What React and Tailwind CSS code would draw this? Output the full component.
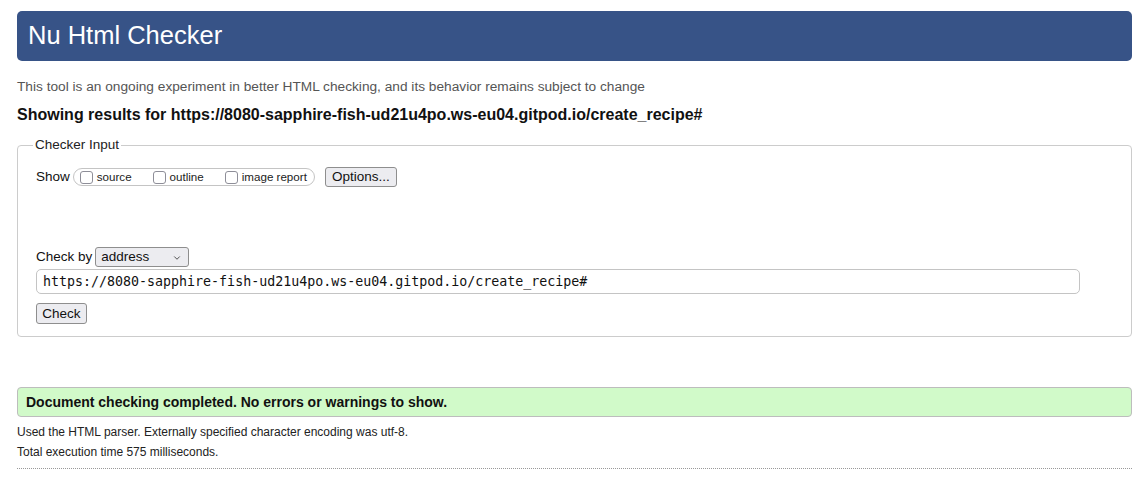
import { ChevronDown } from 'lucide-react'

const url = 'https://8080-sapphire-fish-ud21u4po.ws-eu04.gitpod.io/create_recipe#'

function Box({ label }) {
  return (
    <label className="flex items-center gap-[4px]">
      <input
        type="checkbox"
        className="appearance-none w-[13px] h-[13px] rounded-[3px] border border-[#8e8e98] bg-white"
      />
      <span className="text-[11.6px] text-[#222]">{label}</span>
    </label>
  )
}

function App() {
  return (
    <div className="w-[1140px] h-[480px] bg-white pl-[17px] pr-[8px] pt-[11px] overflow-hidden text-[#111]" style={{ fontFamily: '"Liberation Sans", Arial, sans-serif' }}>
      <div className="h-[50px] rounded-[5px] bg-[#375387] flex items-center pl-[11px]">
        <h1 className="text-[25.5px] text-white leading-none">Nu Html Checker</h1>
      </div>

      <p className="mt-[18px] text-[13.7px] text-[#555] leading-[16px]">
        This tool is an ongoing experiment in better HTML checking, and its behavior remains subject to change
      </p>
      <h2 className="mt-[10px] text-[16px] font-bold leading-[20px] text-[#111]">Showing results for {url}</h2>

      <fieldset className="mt-[12px] border border-[#cccccc] rounded-[4px] pl-[18px] pr-[18px] pt-[13px] pb-[13px] h-[200px]">
        <legend className="ml-[-3px] px-[2px] text-[13.5px] text-[#222] leading-[16px]">Checker Input</legend>

        <div className="flex items-center h-[22px]">
          <span className="text-[13.5px] text-[#111] mr-[3px]">Show</span>
          <div className="h-[18px] border border-[#c4c4c4] rounded-full flex items-center pl-[6px] pr-[7px] gap-[21px]">
            <Box label="source" />
            <Box label="outline" />
            <Box label="image report" />
          </div>
          <button className="ml-[10px] h-[20px] w-[72px] text-[13.5px] text-[#111] bg-[#ececf0] border border-[#8e8e8e] rounded-[3px] leading-none">
            Options...
          </button>
        </div>

        <div className="flex items-center mt-[59px] h-[20px]">
          <span className="text-[13.5px] text-[#111] mr-[3px]">Check by</span>
          <div className="relative h-[20px] w-[94px] border border-[#8e8e8e] rounded-[3px] bg-[#ececf0] flex items-center pl-[5px]">
            <span className="text-[13.5px] text-[#111]">address</span>
            <ChevronDown className="absolute right-[6px] top-[5px] w-[10px] h-[10px] text-[#333]" strokeWidth={2} />
          </div>
        </div>

        <div className="mt-[2px] w-[1044px] h-[25px] border border-[#c4c4c4] rounded-[5px] flex items-center pl-[6px]">
          <span className="text-[13.3px] text-[#111]" style={{ fontFamily: '"DejaVu Sans Mono", monospace' }}>{url}</span>
        </div>

        <button className="mt-[9px] h-[21px] w-[51px] text-[13.5px] text-[#111] bg-[#ececf0] border border-[#8e8e8e] rounded-[3px] leading-none">
          Check
        </button>
      </fieldset>

      <div className="mt-[50px] h-[30px] bg-[#d1fac9] border border-[#bdbdbd] rounded-[4px] flex items-center pl-[8px]">
        <span className="text-[14px] font-bold text-[#111]">Document checking completed. No errors or warnings to show.</span>
      </div>
      <p className="mt-[8px] text-[12px] text-[#222] leading-[15px]">Used the HTML parser. Externally specified character encoding was utf-8.</p>
      <p className="mt-[5px] text-[12px] text-[#222] leading-[15px]">Total execution time 575 milliseconds.</p>
      <div className="mt-[8px] border-t border-dotted border-[#999]" />
    </div>
  )
}

export default App
